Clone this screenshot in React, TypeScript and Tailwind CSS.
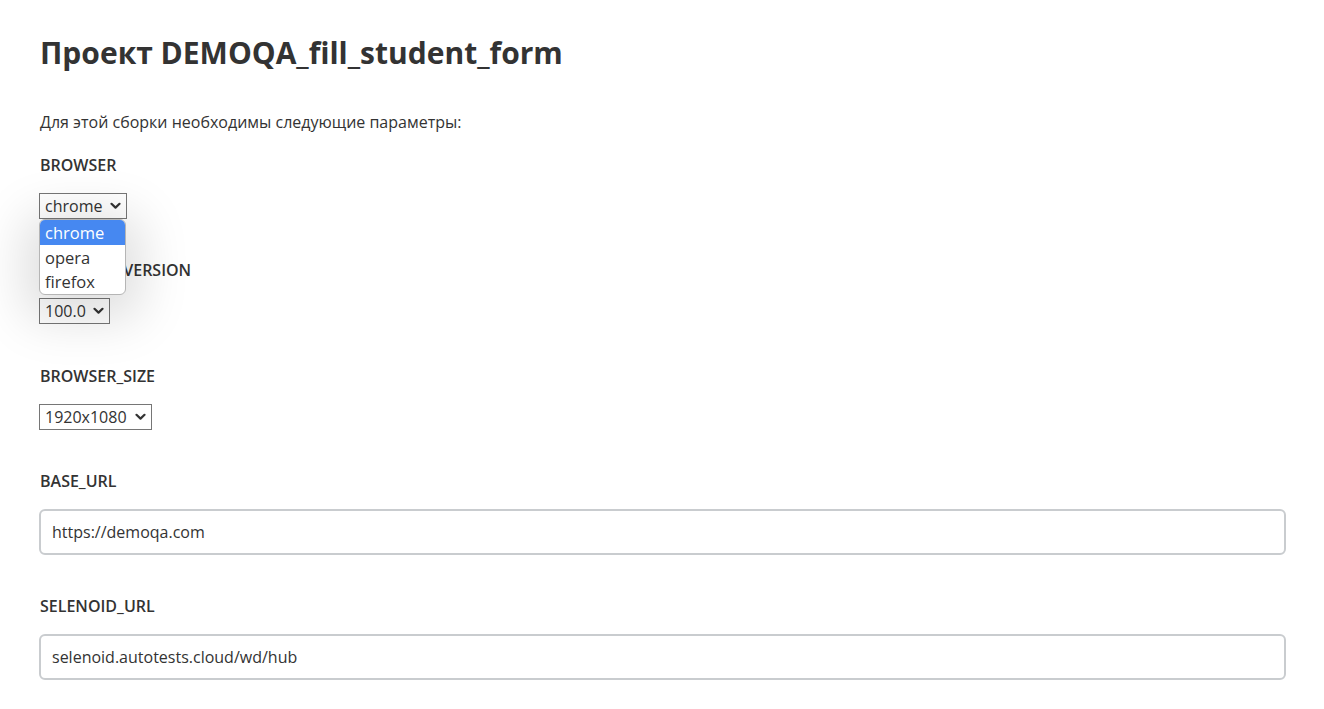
function Chevron() {
  return (
    <svg width="11" height="8" viewBox="0 0 11 8" className="shrink-0">
      <path d="M1.5 1.8 L5.5 5.6 L9.5 1.8" fill="none" stroke="#333" strokeWidth="2.2" strokeLinecap="round" strokeLinejoin="round" />
    </svg>
  );
}

function FakeSelect({ value, width }: { value: string; width: string }) {
  return (
    <div className={`flex h-[26px] items-center justify-between border border-[#767676] bg-white pl-[5px] pr-[5px] text-[16px] leading-none text-[#333] ${width}`}>
      <span>{value}</span>
      <Chevron />
    </div>
  );
}

function Label({ children }: { children: string }) {
  return <div className="h-6 text-[16px] font-semibold leading-6 text-[#333]">{children}</div>;
}

export default function App() {
  return (
    <div className="min-h-[709px] bg-white pl-10 pr-[38px] pt-[35px] text-[#333]" style={{ fontFamily: '"Open Sans", "Noto Sans", sans-serif' }}>
      <h1 className="text-[30px] font-bold leading-9 text-[#333]">Проект DEMOQA_fill_student_form</h1>
      <p className="mt-[39px] text-[16px] leading-6 text-[#333]">Для этой сборки необходимы следующие параметры:</p>

      <div className="mt-[19px] flex flex-col">
        <Label>BROWSER</Label>
        <div className="relative mt-[16px] ml-[-1px]">
          <FakeSelect value="chrome" width="w-[88px]" />
          <div className="absolute left-0 top-[26px] z-10 w-[87px] overflow-hidden rounded-[6px] border border-[#b5b5b5] bg-white text-[16.5px] text-[#333] shadow-[0_10px_50px_15px_rgba(0,0,0,0.13)]">
            <div className="h-[25px] bg-[#4688f1] pl-[5px] leading-[25px] text-white">chrome</div>
            <div className="h-[25px] pl-[5px] leading-[25px]">opera</div>
            <div className="h-[24px] pl-[5px] leading-[24px]">firefox</div>
          </div>
        </div>

        <div className="mt-[39px]">
          <Label>BROWSER_VERSION</Label>
        </div>
        <div className="mt-[16px] ml-[-1px]">
          <FakeSelect value="100.0" width="w-[71px]" />
        </div>

        <div className="mt-[40px]">
          <Label>BROWSER_SIZE</Label>
        </div>
        <div className="mt-[16px] ml-[-1px]">
          <FakeSelect value="1920x1080" width="w-[113px]" />
        </div>

        <div className="mt-[39px]">
          <Label>BASE_URL</Label>
        </div>
        <div className="mt-[16px] ml-[-1px] flex h-[46px] items-center rounded-[6px] border-2 border-[#c9cccf] px-[11px] text-[16px] text-[#333]">
          https://demoqa.com
        </div>

        <div className="mt-[39px]">
          <Label>SELENOID_URL</Label>
        </div>
        <div className="mt-[16px] ml-[-1px] flex h-[46px] items-center rounded-[6px] border-2 border-[#c9cccf] px-[11px] text-[16px] text-[#333]">
          selenoid.autotests.cloud/wd/hub
        </div>
      </div>
    </div>
  );
}
